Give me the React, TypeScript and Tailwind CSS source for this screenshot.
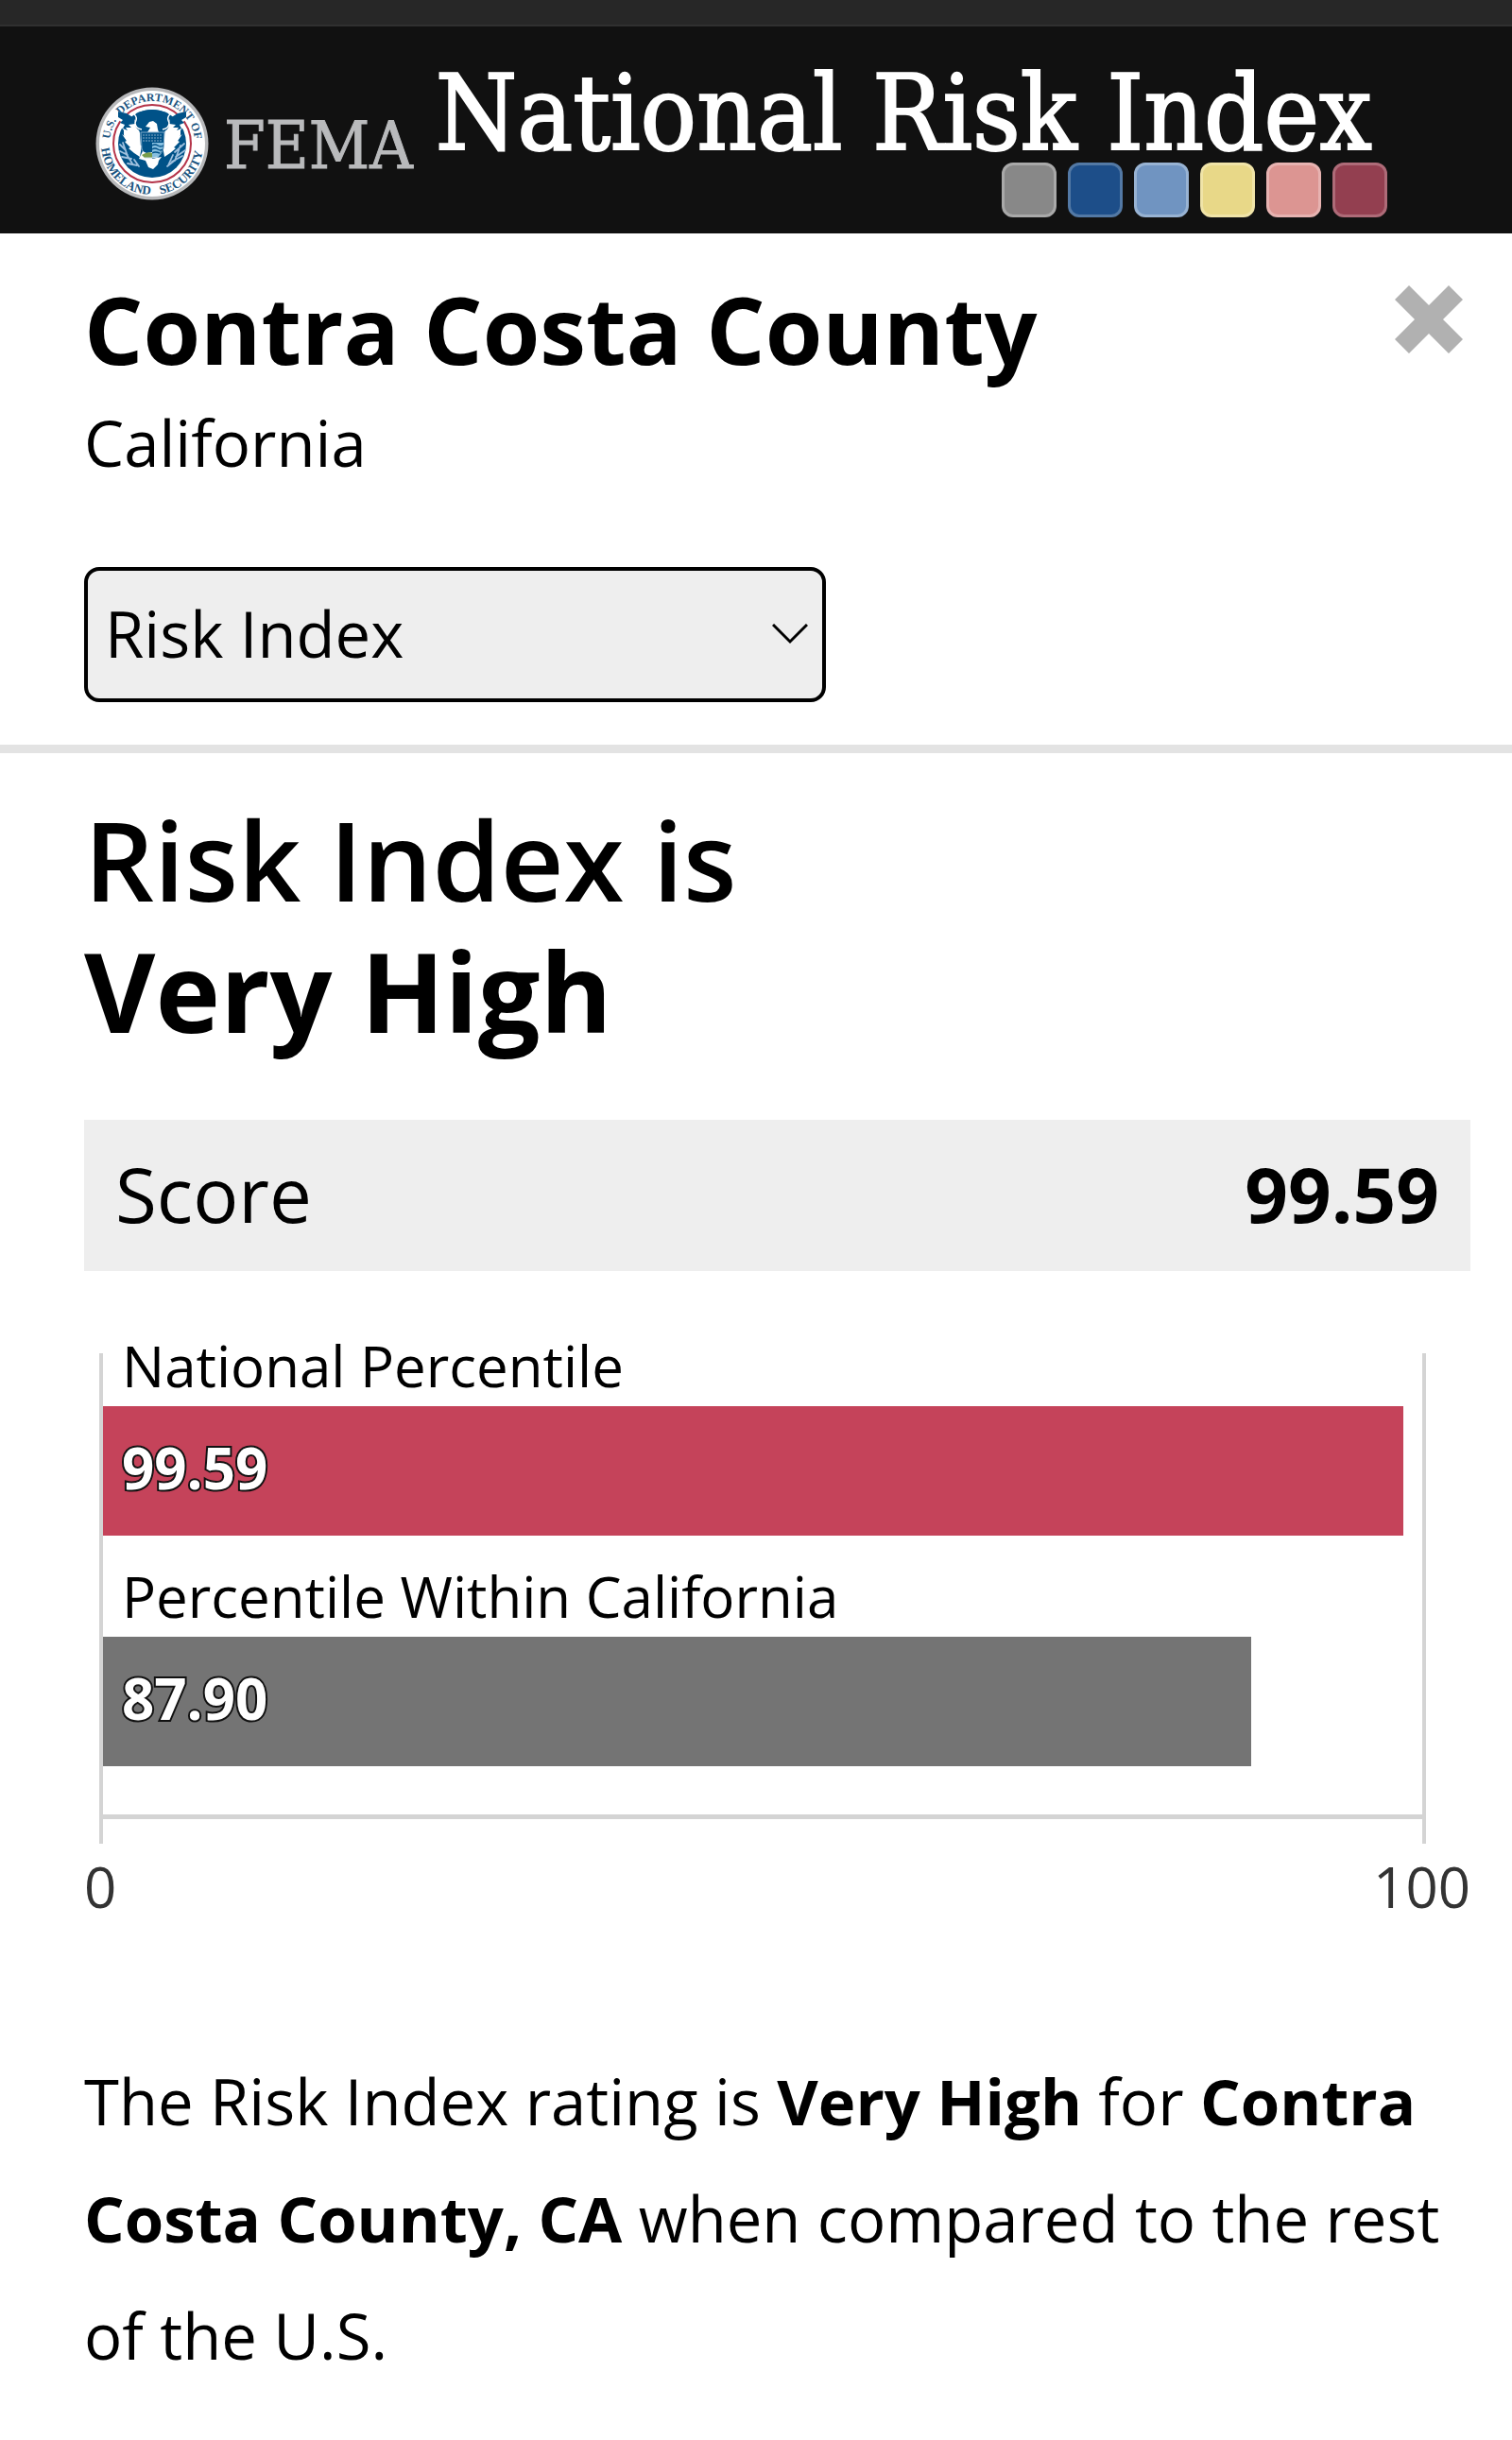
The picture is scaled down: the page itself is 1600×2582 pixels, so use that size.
import { useState } from "react"

type Percentile = {
    label: string
    value: number
    barClass: string
}

const percentiles: Percentile[] = [
    { label: "National Percentile", value: 99.59, barClass: "bg-[#c5435a]" },
    { label: "Percentile Within California", value: 87.9, barClass: "bg-[#747474]" },
]

const swatches = [
    "bg-[#888888] border-[#a9a9a9]",
    "bg-[#1d4e89] border-[#5379a5]",
    "bg-[#7094c1] border-[#98b3d3]",
    "bg-[#e8d888] border-[#f0e4a8]",
    "bg-[#dc9592] border-[#e7b3b1]",
    "bg-[#933f50] border-[#ae6b78]",
]

const Seal = () => (
    <svg viewBox="0 0 120 120" className="size-[120px] shrink-0" role="img" aria-label="Homeland Security seal">
        <defs>
            <path id="seal-top" d="M 15 60 A 45 45 0 0 1 105 60" />
            <path id="seal-bottom" d="M 6 60 A 54 54 0 0 0 114 60" />
        </defs>
        <circle cx="60" cy="60" r="59.5" fill="#b7b8ba" />
        <circle cx="60" cy="60" r="56" fill="#fff" />
        <g fill="#1b5480" fontFamily="Liberation Serif, serif" fontWeight="700" textAnchor="middle">
            <text fontSize="12">
                <textPath href="#seal-top" startOffset="11%">
                    U.S.
                </textPath>
            </text>
            <text fontSize="12">
                <textPath href="#seal-top" startOffset="53%">
                    DEPARTMENT
                </textPath>
            </text>
            <text fontSize="12">
                <textPath href="#seal-top" startOffset="91%">
                    OF
                </textPath>
            </text>
            <text fontSize="13">
                <textPath href="#seal-bottom" startOffset="26%">
                    HOMELAND
                </textPath>
            </text>
            <text fontSize="13">
                <textPath href="#seal-bottom" startOffset="75%">
                    SECURITY
                </textPath>
            </text>
        </g>
        <circle cx="60" cy="60" r="41" fill="#fff" stroke="#b5354a" strokeWidth="2" />
        <circle cx="60" cy="60" r="36" fill="#005288" />
        {/* wings */}
        <path
            d="M24 26 L34 29 L41 34 L45 41 L47 49 L48 64 L44 68 L40 66 L37 61 L33 57 L30 51 L30 46 L27 42 L27 37 L24 33 Z"
            fill="#fff"
        />
        <path
            d="M96 26 L86 29 L79 34 L75 41 L73 49 L72 64 L76 68 L80 66 L83 61 L87 57 L90 51 L90 46 L93 42 L93 37 L96 33 Z"
            fill="#fff"
        />
        <path
            d="M24 26 L33 28 L41 33 L42 39 L35 40 L38 43 L32 43 L34 46 L29 44 L31 40 L26 38 L29 35 L24 32 Z M96 26 L87 28 L79 33 L78 39 L85 40 L82 43 L88 43 L86 46 L91 44 L89 40 L94 38 L91 35 L96 32 Z"
            fill="#005288"
        />
        <path d="M43 28 Q60 20 77 28 L78 40 Q77 46 72 47 H48 Q43 45 42 40 Z" fill="#005288" />
        <path
            d="M41 29 Q45 32 42 38 Q42 44 49 45 M79 29 Q75 32 78 38 Q78 44 71 45"
            fill="none"
            stroke="#fff"
            strokeWidth="1.5"
        />
        {/* lower wing feathers and branches */}
        <path
            d="M28 50 L33 57 L31 58 L37 64 L35 65 L41 70 L47 74 L49 62 L42 61 L40 57 L36 56 Z M92 50 L87 57 L89 58 L83 64 L85 65 L79 70 L73 74 L71 62 L78 61 L80 57 L84 56 Z"
            fill="#fff"
        />
        <path
            d="M26 61 L32 67 M26 68 L34 72 M29 59 L34 73 M28 74 L38 76 M32 70 L39 81 M34 81 L44 83 M41 77 L46 84 M94 60 L84 69 M95 67 L85 74 M90 62 L84 78 M92 73 L81 79 M86 76 L76 84 M82 72 L77 83"
            stroke="#9fc0de"
            strokeWidth="1.8"
            strokeLinecap="round"
        />
        {/* head */}
        <path d="M53 42 L57 37 L61 36 L65 39 L66 45 L67 48 H55 L58 43 Z" fill="#fff" />
        {/* shield */}
        <path d="M48 48 H73 L72 65 Q69 74 60 78 Q51 73 49 65 Z" fill="#005288" stroke="#7fa9c9" strokeWidth="1" />
        <path d="M50 51 H71 M50 54 H71 M50 57 H71" stroke="#86abc8" strokeWidth="1" strokeDasharray="2 1" />
        <path d="M60 59 H72 L71 66 L66 75 H60 Z" fill="#86bfe0" />
        <path
            d="M60 62 Q63 60 66 62 T72 62 M60 66 Q63 64 66 66 T71 66 M60 70 Q63 68 68 70"
            fill="none"
            stroke="#005288"
            strokeWidth="1.4"
        />
        {/* tail, field and talons */}
        <path d="M46 76 L50 68 L54 70 L60 69 V76 L70 74 L67 78 L66 82 L61 87 L56 85 L53 78 Z" fill="#fff" />
        <path d="M49 72 Q55 68 60 70 V75 L52 75 Z" fill="#789d4a" />
        <path d="M52 75 H60 L65 74" fill="none" stroke="#c9dbe6" strokeWidth="1" />
    </svg>
)

const Header = () => (
    <header>
        <div className="h-7 border-b-2 border-[#303030] bg-[#272727]" />
        <div className="flex items-start bg-[#111111] pt-10 pb-[17px] pl-[101px] font-['DejaVu_Serif_Condensed','DejaVu_Serif',serif]">
            <div className="mt-6 flex items-center gap-4">
                <Seal />
                <span className="pt-1 text-[70px] leading-[72px] text-[#b9babc] [-webkit-text-stroke:1px_#b9babc]">
                    FEMA
                </span>
            </div>
            <div className="ml-6 flex flex-col items-end">
                <h1 className="mr-4 text-[110px] leading-[104px] whitespace-nowrap text-white [-webkit-text-stroke:2px_#fff]">
                    National Risk Index
                </h1>
                <div className="flex gap-3">
                    {swatches.map(swatch => (
                        <span key={swatch} className={`size-[58px] rounded-xl border-3 ${swatch}`} />
                    ))}
                </div>
            </div>
        </div>
    </header>
)

const PercentileChart = () => (
    <div className="mt-[87px]">
        <div className="mr-[47px] ml-4 border-x-4 border-[#d4d4d4] pb-[26px]">
            <div className="border-b-5 border-[#d4d4d4]">
                {percentiles.map(({ label, value, barClass }) => (
                    <div key={label} className="pb-[51px]">
                        <div className="h-14 pl-5 text-[60px] leading-[26px] whitespace-nowrap">{label}</div>
                        <div
                            className={`flex h-[137px] items-center pb-2 pl-5 ${barClass}`}
                            style={{ width: `${value * 0.99}%` }}
                        >
                            <span className="text-[60px] font-bold text-white [-webkit-text-stroke:4px_#111] [paint-order:stroke_fill]">
                                {value.toFixed(2)}
                            </span>
                        </div>
                    </div>
                ))}
            </div>
        </div>
        <div className="mt-[15px] flex justify-between text-[60px] leading-[60px] text-[#333333]">
            <span>0</span>
            <span>100</span>
        </div>
    </div>
)

const App = () => {
    const [layer, setLayer] = useState("Risk Index")
    return (
        <div className="min-h-screen bg-white font-['Open_Sans',sans-serif] text-black">
            <Header />
            <section className="border-b-9 border-[#e3e3e3] pt-[33px] pr-[44px] pb-[45px] pl-[89px]">
                <div className="flex items-start justify-between">
                    <h2 className="text-[98px] leading-[136px] font-bold">Contra Costa County</h2>
                    <button type="button" aria-label="Close" className="mt-[22px] mr-2">
                        <svg viewBox="0 0 72 72" className="size-[72px]" fill="#b1b1b1">
                            <path d="M15 0 L36 21 L57 0 L72 15 L51 36 L72 57 L57 72 L36 51 L15 72 L0 57 L21 36 L0 15 Z" />
                        </svg>
                    </button>
                </div>
                <p className="mt-1.5 text-[67px] leading-[92px]">California</p>
                <div className="relative mt-[86px] w-[785px]">
                    <select
                        aria-label="Layer"
                        value={layer}
                        onChange={e => setLayer(e.target.value)}
                        className="h-[143px] w-full appearance-none rounded-2xl border-4 border-black bg-[#eeeeee] pb-0.5 pl-[18px] text-[67px]"
                    >
                        <option>Risk Index</option>
                    </select>
                    <svg
                        viewBox="0 0 38 22"
                        className="pointer-events-none absolute top-[60px] right-[19px] h-[22px] w-[38px]"
                        fill="none"
                        stroke="#000"
                        strokeWidth="3"
                    >
                        <path d="M1 1 L19 19 L37 1" />
                    </svg>
                </div>
            </section>
            <main className="pt-[43px] pr-[44px] pb-12 pl-[89px]">
                <h2 className="text-[116px] leading-[139px] font-semibold">
                    Risk Index is
                    <br />
                    <strong className="font-bold">Very High</strong>
                </h2>
                <div className="mt-[67px] flex h-[160px] items-center justify-between bg-[#eeeeee] px-[33px] pb-1 text-[80px]">
                    <span>Score</span>
                    <strong>99.59</strong>
                </div>
                <PercentileChart />
                <p className="mt-[135px] text-[67px] leading-[124px]">
                    The Risk Index rating is <strong>Very High</strong> for <strong>Contra Costa County, CA</strong> when
                    compared to the rest of the U.S.
                </p>
            </main>
        </div>
    )
}

export default App
